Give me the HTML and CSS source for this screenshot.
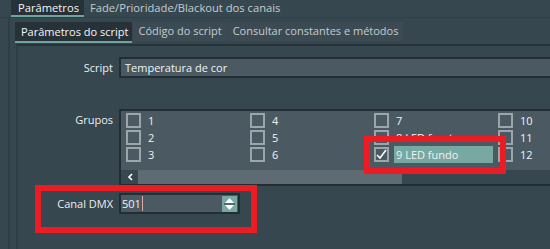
FILE: index.html
```html
<!DOCTYPE html>
<html>
<head>
    <title>Parâmetros do script</title>
    <link rel="stylesheet" href="styles.css">
</head>
<body>
    <div class="top-tabs">
        <div class="tab active">Parâmetros</div>
        <div class="tab">Fade/Prioridade/Blackout dos canais</div>
    </div>
    <div class="outer">
        <div class="sub-tabs">
            <div class="tab active">Parâmetros do script</div>
            <div class="tab inactive">Código do script</div>
            <div class="tab inactive">Consultar constantes e métodos</div>
        </div>
        <div class="page">
            <div class="row row-script">
                <div class="label">Script</div>
                <div class="field">Temperatura de cor</div>
            </div>
            <div class="row row-groups">
                <div class="label">Grupos</div>
                <div class="groups">
                    <div class="group-grid">
                        <div class="item"><span class="check"></span><span class="name">1</span></div>
                        <div class="item"><span class="check"></span><span class="name">4</span></div>
                        <div class="item"><span class="check"></span><span class="name">7</span></div>
                        <div class="item"><span class="check"></span><span class="name">10</span></div>
                        <div class="item"><span class="check"></span><span class="name">2</span></div>
                        <div class="item"><span class="check"></span><span class="name">5</span></div>
                        <div class="item"><span class="check"></span><span class="name">8 LED frente</span></div>
                        <div class="item"><span class="check"></span><span class="name">11</span></div>
                        <div class="item"><span class="check"></span><span class="name">3</span></div>
                        <div class="item"><span class="check"></span><span class="name">6</span></div>
                        <div class="item">
                            <span class="check checked">
                                <svg width="11" height="11" viewBox="0 0 11 11"><polyline points="1,6 4,9 10,1" fill="none" stroke="#ffffff" stroke-width="1.6"/></svg>
                            </span>
                            <span class="name selected">9 LED fundo</span>
                        </div>
                        <div class="item"><span class="check"></span><span class="name">12</span></div>
                    </div>
                    <div class="scrollbar">
                        <div class="scroll-btn">
                            <svg width="6" height="8" viewBox="0 0 6 8"><polyline points="5,1 2,4 5,7" fill="none" stroke="#ffffff" stroke-width="1.6"/></svg>
                        </div>
                        <div class="scroll-handle"></div>
                    </div>
                </div>
            </div>
            <div class="row row-dmx">
                <div class="label">Canal DMX</div>
                <div class="spin">
                    <div class="spin-value">501<span class="caret"></span></div>
                    <div class="spin-btns">
                        <svg width="15" height="16" viewBox="0 0 15 16">
                            <polygon points="7.5,2 12,7 3,7" fill="#ffffff"/>
                            <rect x="2" y="7.5" width="11" height="1" fill="#263238"/>
                            <polygon points="3,9 12,9 7.5,14" fill="#ffffff"/>
                        </svg>
                    </div>
                </div>
            </div>
        </div>
    </div>

    <div class="mark mark-group"></div>
    <div class="mark mark-dmx"></div>
</body>
</html>
```

FILE: styles.css
```css
* {
    margin: 0;
    padding: 0;
    box-sizing: border-box;
}

body {
    font-family: 'Open Sans', 'Noto Sans', sans-serif;
    font-size: 11px;
    background-color: #37474f;
    color: #eef3f4;
    width: 550px;
    height: 249px;
    overflow: hidden;
    position: relative;
}

.top-tabs {
    display: flex;
    height: 18px;
    padding-left: 11px;
    border-bottom: 1px solid #303f46;
}

.tab {
    line-height: 16px;
    padding: 0 6px 0 6px;
    color: #c3ccd0;
    white-space: nowrap;
}

.top-tabs .tab {
    font-size: 11.2px;
}

.top-tabs .tab.active {
    background-color: #263238;
    color: #f2f6f7;
    border-bottom: 2px solid #6fa39d;
    padding: 0 5px 0 7px;
}

.outer {
    margin-left: 8px;
    border-left: 2px solid #2f3d44;
    height: 231px;
}

.sub-tabs {
    display: flex;
    align-items: flex-end;
    height: 25px;
    padding-left: 5px;
    padding-top: 3px;
}

.sub-tabs .tab {
    height: 19px;
    line-height: 18px;
    padding: 0 5px;
}

.sub-tabs .tab.active {
    height: 21px;
    line-height: 19px;
    background-color: #263238;
    color: #f2f6f7;
    border-bottom: 2px solid #6fa39d;
    padding: 0 4px 0 6px;
}

.sub-tabs .tab.inactive {
    background-color: #3c4b53;
    margin-left: 1px;
    margin-bottom: 2px;
    padding: 0 5px 0 5px;
}

.page {
    margin-left: 6px;
    margin-top: 1px;
    border-left: 2px solid #2f3d44;
    border-top: 2px solid #263238;
    height: 210px;
    padding-top: 11px;
}

.row {
    display: flex;
    align-items: flex-start;
}

.label {
    width: 95px;
    flex-shrink: 0;
    margin-right: 6px;
    text-align: right;
    color: #e9eff1;
}

.row-script .label {
    line-height: 21px;
}

.field {
    flex: 1;
    height: 21px;
    line-height: 17px;
    background-color: #4b5a62;
    border: 2px solid #232e34;
    border-right: none;
    padding-left: 4px;
}

.row-groups {
    margin-top: 31px;
}

.row-groups .label {
    margin-top: 2px;
    line-height: 17px;
}

.groups {
    flex: 1;
    min-width: 0;
    height: 77px;
    border: 2px solid #232e34;
    border-right: none;
    background-color: #37474f;
}

.group-grid {
    background-color: #4b5a62;
    height: 59px;
    padding: 1px 0 0 5px;
    display: grid;
    grid-template-columns: repeat(4, 124px);
    grid-auto-rows: 17px;
    overflow: hidden;
}

.item {
    display: flex;
    align-items: center;
}

.check {
    width: 15px;
    height: 15px;
    border: 2px solid #9ba6ab;
    margin-right: 5px;
    flex-shrink: 0;
    display: flex;
    align-items: center;
    justify-content: center;
}

.name {
    width: 99px;
    height: 17px;
    line-height: 17px;
    padding-left: 2px;
    white-space: nowrap;
}

.name.selected {
    background-color: #78a8a2;
}

.scrollbar {
    display: flex;
    height: 14px;
}

.scroll-btn {
    width: 17px;
    display: flex;
    align-items: center;
    justify-content: center;
}

.scroll-handle {
    width: 264px;
    background-color: #5f6b72;
}

.row-dmx {
    margin-top: 7px;
}

.row-dmx .label {
    line-height: 21px;
}

.spin {
    width: 121px;
    height: 21px;
    display: flex;
    justify-content: space-between;
    background-color: #4b5a62;
    border: 2px solid #232e34;
}

.spin-value {
    line-height: 17px;
    padding-left: 1px;
    display: flex;
    align-items: center;
}

.caret {
    display: inline-block;
    width: 1px;
    height: 15px;
    background-color: #d9a9a9;
    margin-left: 1px;
}

.spin-btns {
    width: 15px;
    height: 16px;
    margin: 1px 1px 0 0;
    background-color: #78a8a2;
}

.spin-btns svg {
    display: block;
}

.mark {
    position: absolute;
    border: 6px solid #ec1c24;
}

.mark-group {
    left: 364px;
    top: 136px;
    width: 142px;
    height: 38px;
}

.mark-dmx {
    left: 35px;
    top: 185px;
    width: 222px;
    height: 48px;
}
```
